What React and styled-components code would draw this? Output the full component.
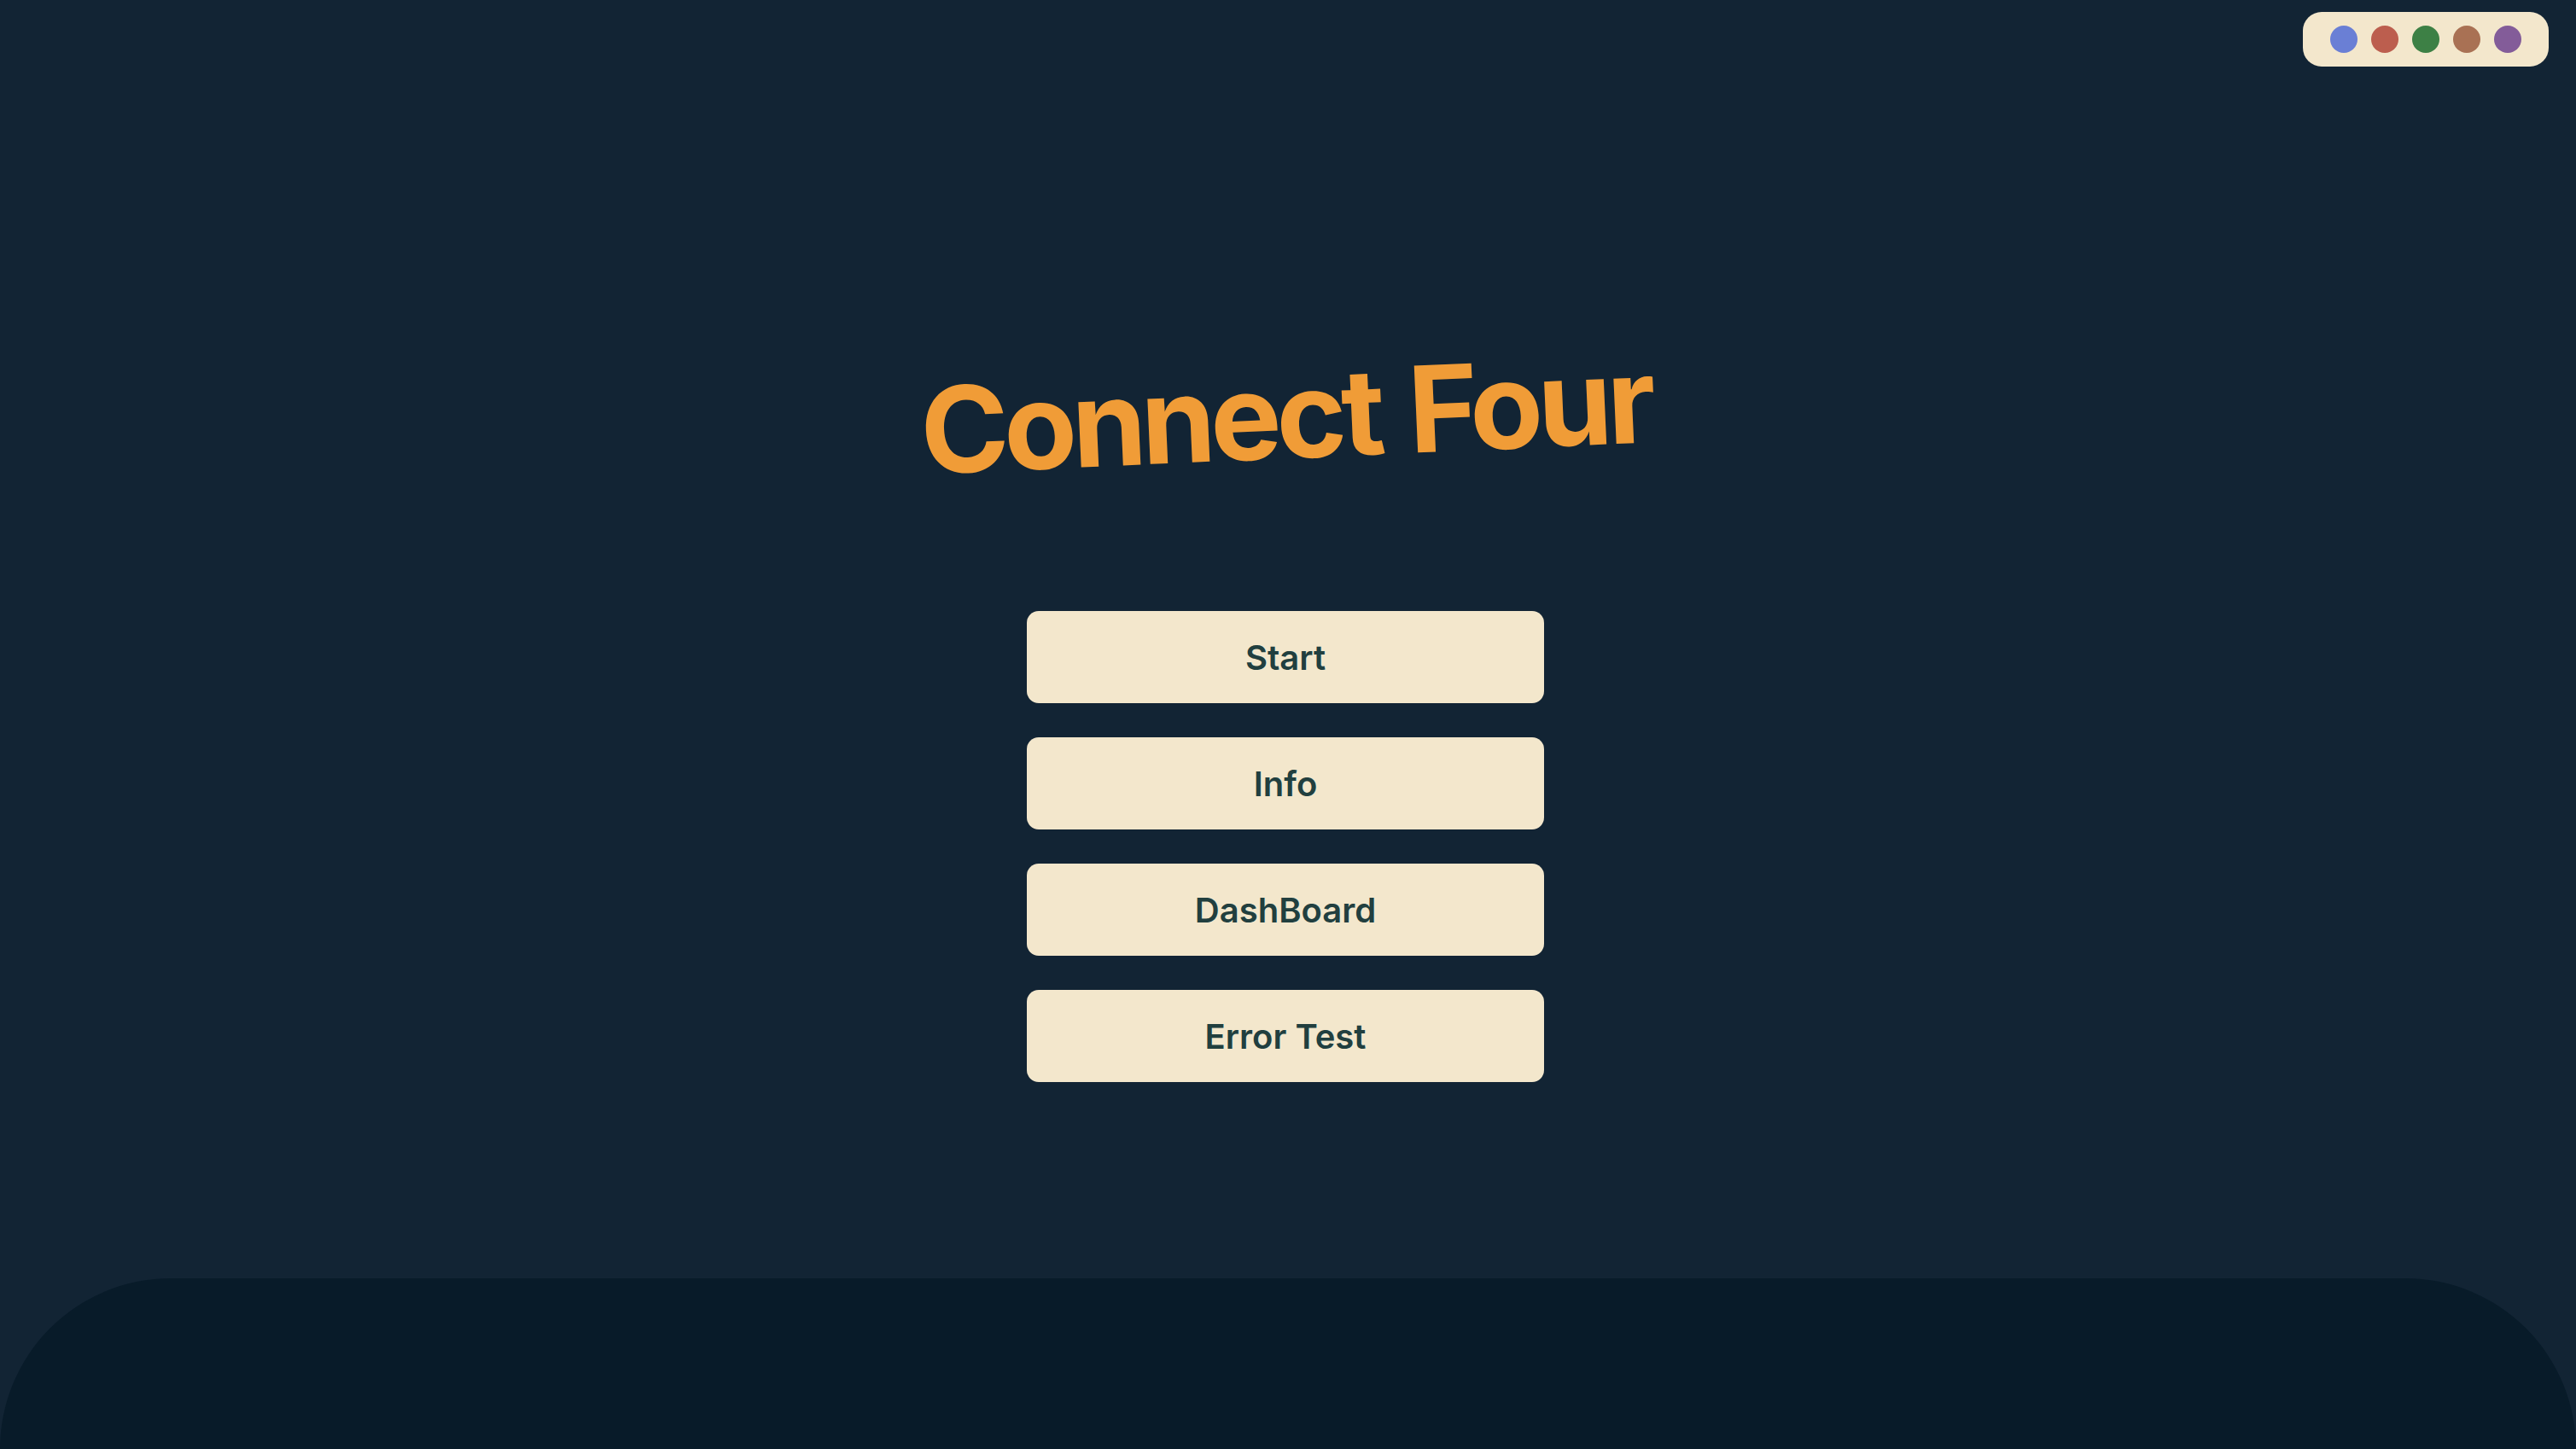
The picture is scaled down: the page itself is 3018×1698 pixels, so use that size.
import React from "react";
import styled, { createGlobalStyle } from "styled-components";

const GlobalStyle = createGlobalStyle`
  html, body {
    margin: 0;
    padding: 0;
    background: #122434;
    font-family: Inter, "Noto Sans", sans-serif;
  }
  * { box-sizing: border-box; }
`;

const Page = styled.div`
  position: relative;
  min-height: 100vh;
  display: flex;
  flex-direction: column;
  background: #122434;
  overflow: hidden;
`;

const Main = styled.main`
  flex: 1;
  display: flex;
  flex-direction: column;
  align-items: center;
  padding: 416px 6px 0 0;
`;

const Title = styled.h1`
  margin: 0;
  font-family: Inter, "Noto Sans", sans-serif;
  font-weight: 700;
  font-size: 140px;
  line-height: 1;
  letter-spacing: -6px;
  word-spacing: 6px;
  color: #f09c37;
  transform: rotate(-2.5deg);
  white-space: nowrap;
`;

const ButtonList = styled.nav`
  margin-top: 160px;
  display: flex;
  flex-direction: column;
  gap: 40px;
`;

const MenuButton = styled.button`
  width: 606px;
  height: 108px;
  border: none;
  border-radius: 14px;
  background: #f3e7cc;
  color: #213f3f;
  font-family: Inter, "Noto Sans", sans-serif;
  font-weight: 600;
  font-size: 40px;
  cursor: pointer;
`;

const Footer = styled.footer`
  height: 200px;
  background: #081b29;
  border-radius: 200px 200px 0 0;
`;

const Palette = styled.div`
  position: absolute;
  top: 14px;
  right: 32px;
  display: flex;
  gap: 16px;
  padding: 16px 32px;
  background: #f3e7cc;
  border-radius: 22px;
`;

const Swatch = styled.span`
  width: 32px;
  height: 32px;
  border-radius: 50%;
  background: ${(p) => p.$color};
`;

const colors = ["#6a7fd5", "#bc5e4e", "#3d8045", "#a97154", "#835c99"];
const items = ["Start", "Info", "DashBoard", "Error Test"];

export default function App() {
  return (
    <>
      <GlobalStyle />
      <Page>
        <Palette>
          {colors.map((c) => (
            <Swatch key={c} $color={c} />
          ))}
        </Palette>
        <Main>
          <Title>Connect Four</Title>
          <ButtonList>
            {items.map((t) => (
              <MenuButton key={t}>{t}</MenuButton>
            ))}
          </ButtonList>
        </Main>
        <Footer />
      </Page>
    </>
  );
}
